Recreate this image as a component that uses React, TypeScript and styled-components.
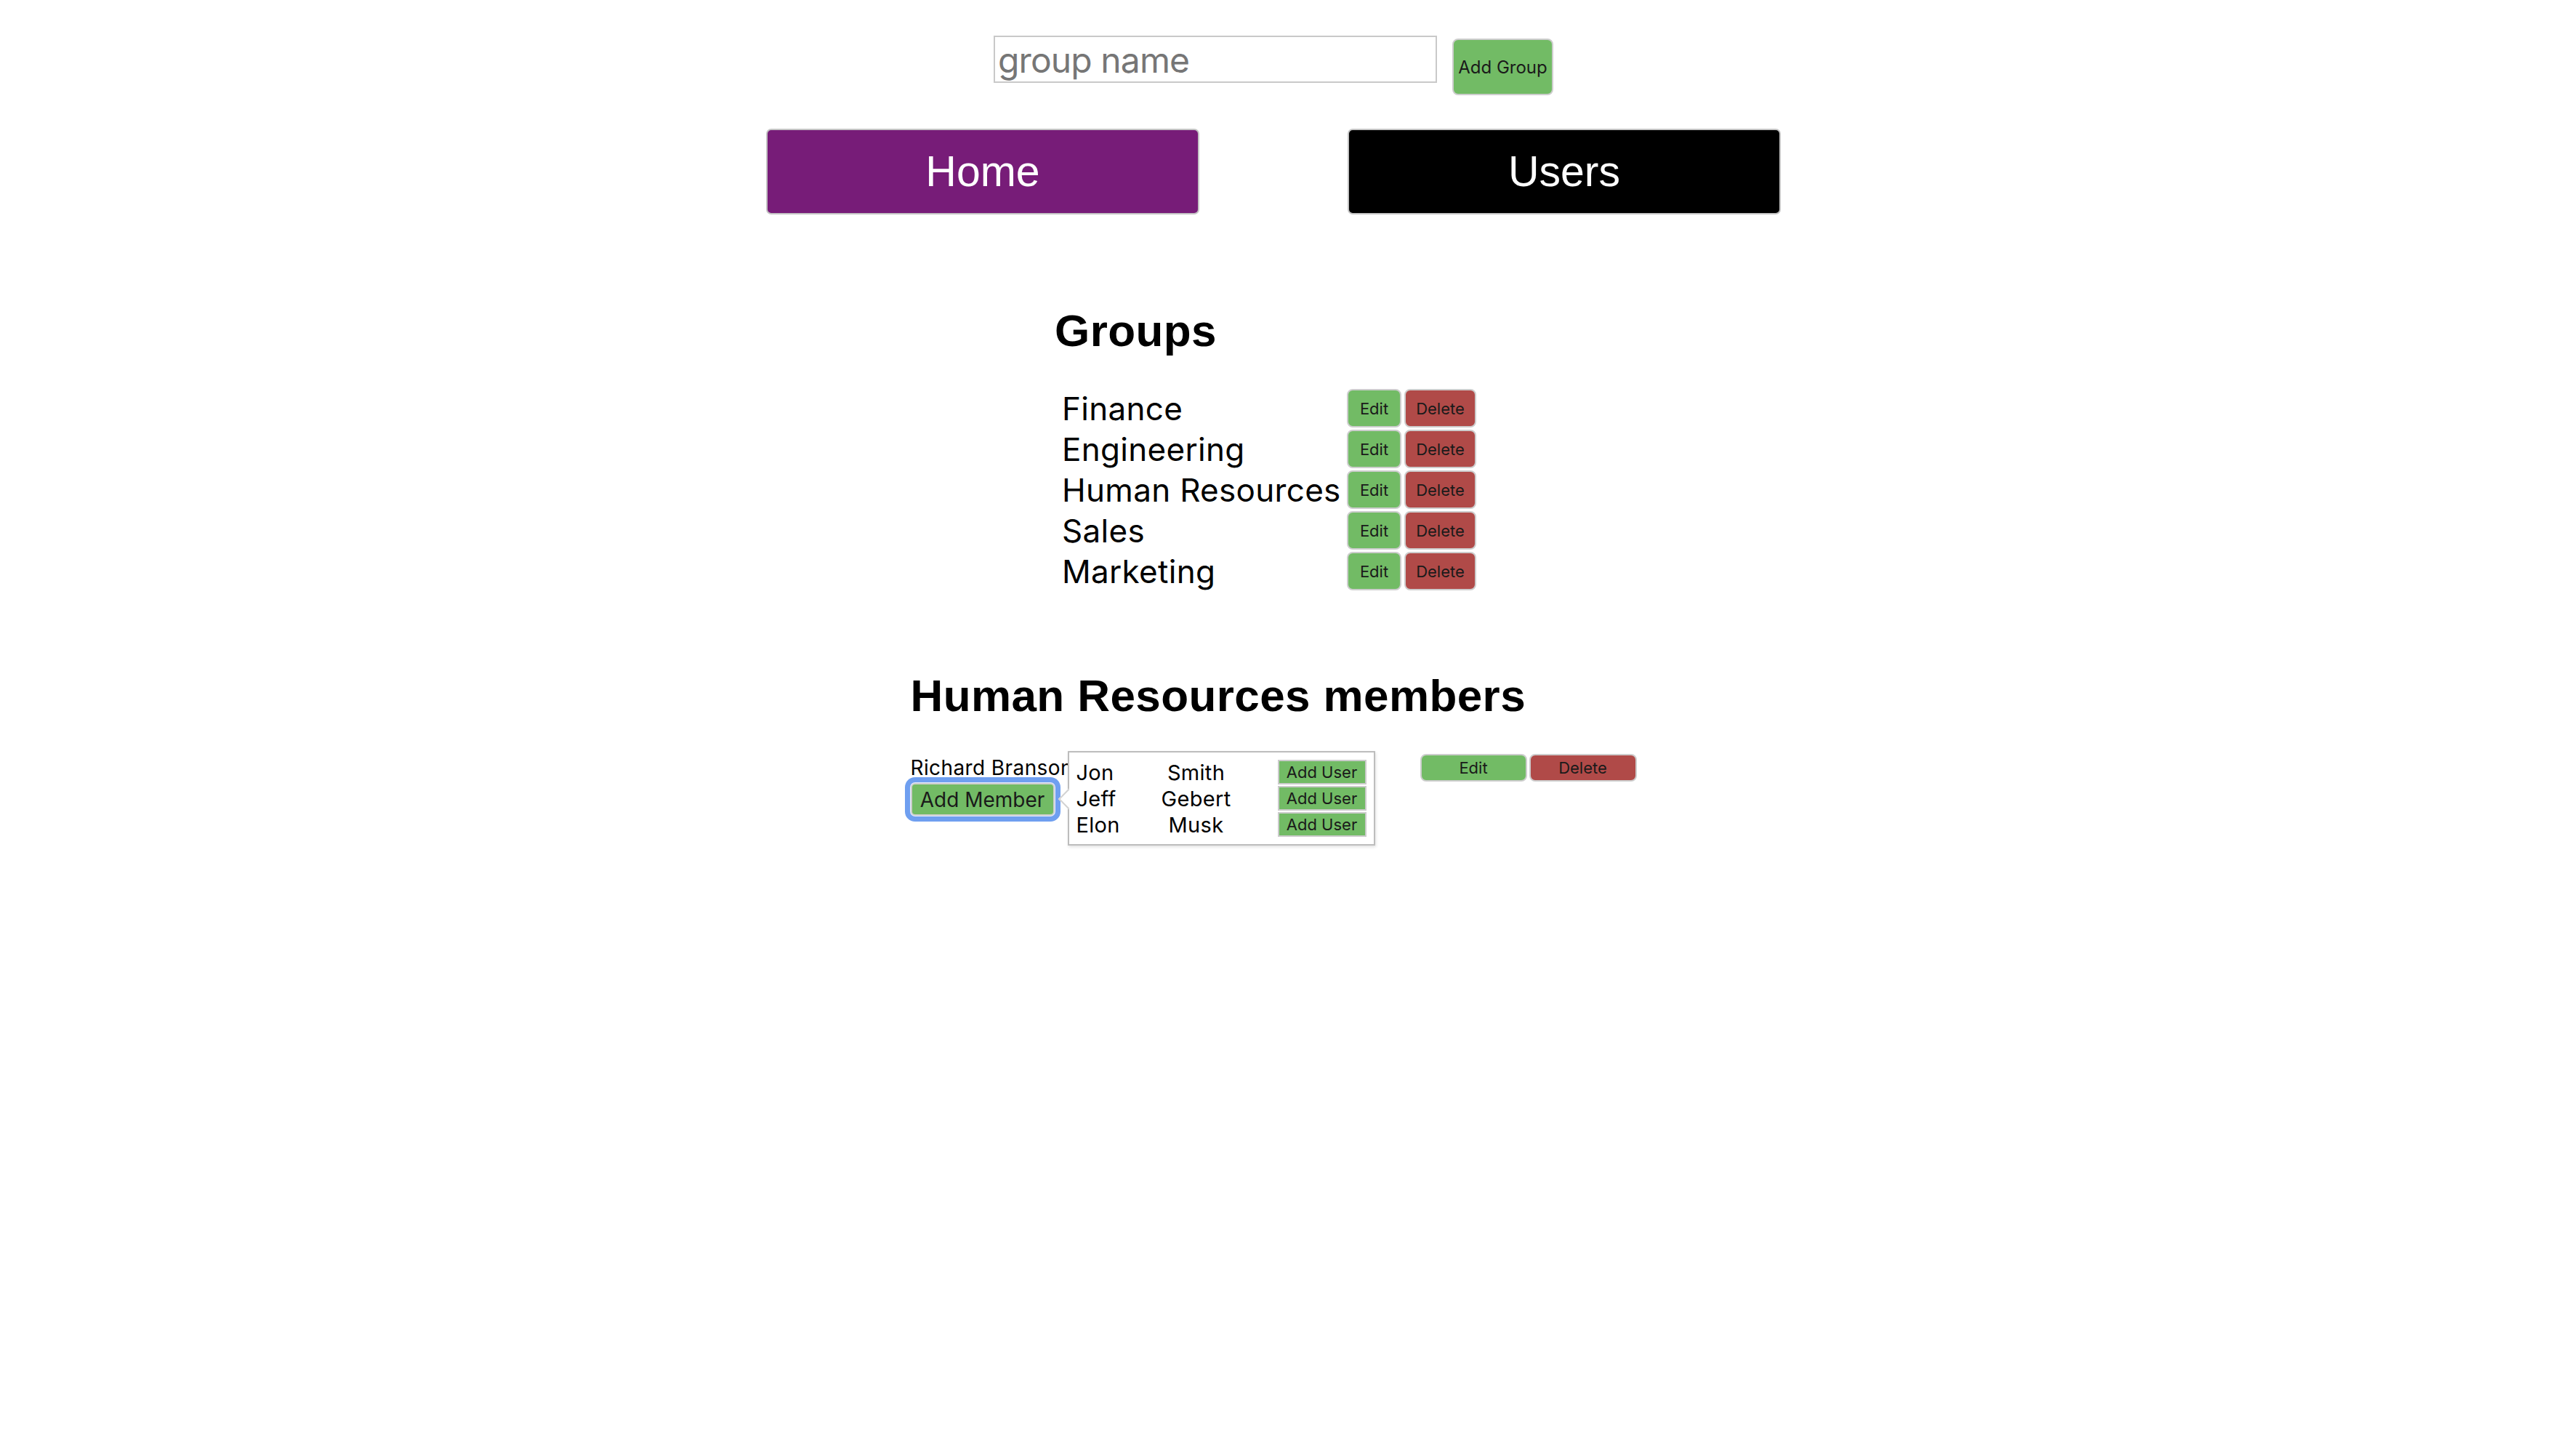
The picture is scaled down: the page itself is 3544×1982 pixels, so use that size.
import React from 'react';
import styled, { createGlobalStyle } from 'styled-components';

const GlobalStyle = createGlobalStyle`
    body {
        margin: 0;
        background: #ffffff;
        font-family: Inter, "Liberation Sans", sans-serif;
        color: #000000;
    }
`

const GREEN = '#72bb65';
const RED = '#b04a48';

const Page = styled.div`
    box-sizing: border-box;
    width: 3504px;
    min-height: 1982px;
    display: flex;
    flex-direction: column;
    align-items: center;
    padding-top: 49px;
`

const SearchBar = styled.div`
    display: flex;
    align-items: flex-start;
    gap: 21px;
`

const GroupInput = styled.input`
    box-sizing: border-box;
    width: 610px;
    height: 65px;
    border: 2px solid #c9c9c9;
    padding: 2px 4px 0;
    font-family: Inter, sans-serif;
    font-size: 48px;
    letter-spacing: -0.9px;
    color: #000;
    outline: none;
    &::placeholder {
        color: #767676;
    }
`

const ActionButton = styled.button<{ $tone?: 'green' | 'red' }>`
    box-sizing: border-box;
    background: ${p => (p.$tone === 'red' ? RED : GREEN)};
    border: 2px solid #cdcdcd;
    border-radius: 8px;
    color: #1a1a1a;
    font-family: Inter, sans-serif;
    padding: 0;
    cursor: pointer;
`

const AddGroupButton = styled(ActionButton)`
    width: 139px;
    height: 78px;
    margin-top: 4px;
    font-size: 24px;
`

const Nav = styled.div`
    display: flex;
    gap: 204px;
    margin-top: 46px;
`

const NavButton = styled.button<{ $bg: string }>`
    box-sizing: border-box;
    width: 596px;
    height: 118px;
    background: ${p => p.$bg};
    border: 2px solid #c4c4c4;
    border-radius: 7px;
    color: #ffffff;
    font-family: "Liberation Sans", Arial, sans-serif;
    font-size: 59px;
    cursor: pointer;
`

const Heading = styled.h1`
    margin: 0;
    font-family: "Liberation Sans", Arial, sans-serif;
    font-weight: 700;
    font-size: 62px;
    line-height: 70px;
    letter-spacing: 0.4px;
`

const GroupsSection = styled.section`
    width: 602px;
    margin-top: 125px;
`

const GroupTable = styled.div`
    display: grid;
    grid-template-columns: 398px 75px 99px;
    grid-auto-rows: 53px;
    column-gap: 4px;
    row-gap: 3px;
    margin-top: 45px;
`

const GroupName = styled.div`
    display: flex;
    align-items: center;
    padding-left: 10px;
    font-size: 44px;
    letter-spacing: 0.3px;
    white-space: nowrap;
`

const RowButton = styled(ActionButton)`
    height: 53px;
    font-size: 22px;
`

const MembersSection = styled.section`
    width: 999px;
    margin-top: 110px;
`

const MemberRow = styled.div`
    position: relative;
    display: grid;
    grid-template-columns: 698px 147px 148px;
    column-gap: 3px;
    align-items: start;
    margin-top: 45px;
`

const MemberCell = styled.div`
    display: flex;
    flex-direction: column;
    align-items: flex-start;
    padding-top: 3px;
`

const MemberName = styled.div`
    font-size: 28px;
    line-height: 32px;
    letter-spacing: 0.4px;
    white-space: nowrap;
`

const AddMemberButton = styled(ActionButton)`
    width: 198px;
    height: 45px;
    margin-top: 5px;
    font-size: 28px;
    border-radius: 6px;
    box-shadow: 0 0 0 1px #e6eefc, 0 0 0 8px #6f9ff0;
`

const MemberButton = styled(ActionButton)`
    height: 38px;
    font-size: 22px;
`

const Popover = styled.div`
    position: absolute;
    left: 216px;
    top: -4px;
    box-sizing: border-box;
    width: 423px;
    height: 130px;
    padding: 10px;
    background: #ffffff;
    border: 2px solid #bdbdbd;
    box-shadow: 1px 2px 4px rgba(0, 0, 0, 0.12);
    z-index: 2;

    &::before {
        content: '';
        position: absolute;
        left: -11px;
        top: 54px;
        width: 18px;
        height: 18px;
        background: #ffffff;
        border-left: 2px solid #d2d2d2;
        border-bottom: 2px solid #d2d2d2;
        transform: rotate(45deg);
    }
`

const UserGrid = styled.div`
    position: relative;
    display: grid;
    grid-template-columns: 100px 130px 1fr;
    grid-auto-rows: 34px;
    row-gap: 2px;
    align-items: center;
    font-size: 29px;
    letter-spacing: 0.3px;
`

const LastName = styled.div`
    text-align: center;
`

const AddUserButton = styled.button`
    box-sizing: border-box;
    justify-self: end;
    width: 122px;
    height: 34px;
    padding: 0;
    background: ${GREEN};
    border: 2px solid #cbcbcb;
    color: #1a1a1a;
    font-family: Inter, sans-serif;
    font-size: 22px;
    letter-spacing: 0;
`

const groups = ['Finance', 'Engineering', 'Human Resources', 'Sales', 'Marketing'];

const users = [
    { first: 'Jon', last: 'Smith' },
    { first: 'Jeff', last: 'Gebert' },
    { first: 'Elon', last: 'Musk' },
];

export default function App() {
    return (
        <>
            <GlobalStyle />
            <Page>
                <SearchBar>
                    <GroupInput placeholder="group name" />
                    <AddGroupButton>Add Group</AddGroupButton>
                </SearchBar>

                <Nav>
                    <NavButton $bg="#771c78">Home</NavButton>
                    <NavButton $bg="#000000">Users</NavButton>
                </Nav>

                <GroupsSection>
                    <Heading>Groups</Heading>
                    <GroupTable>
                        {groups.map(g => (
                            <React.Fragment key={g}>
                                <GroupName>{g}</GroupName>
                                <RowButton>Edit</RowButton>
                                <RowButton $tone="red">Delete</RowButton>
                            </React.Fragment>
                        ))}
                    </GroupTable>
                </GroupsSection>

                <MembersSection>
                    <Heading>Human Resources members</Heading>
                    <MemberRow>
                        <MemberCell>
                            <MemberName>Richard Branson</MemberName>
                            <AddMemberButton>Add Member</AddMemberButton>
                        </MemberCell>
                        <MemberButton>Edit</MemberButton>
                        <MemberButton $tone="red">Delete</MemberButton>
                        <Popover>
                            <UserGrid>
                                {users.map(u => (
                                    <React.Fragment key={u.first}>
                                        <div>{u.first}</div>
                                        <LastName>{u.last}</LastName>
                                        <AddUserButton>Add User</AddUserButton>
                                    </React.Fragment>
                                ))}
                            </UserGrid>
                        </Popover>
                    </MemberRow>
                </MembersSection>
            </Page>
        </>
    );
}
